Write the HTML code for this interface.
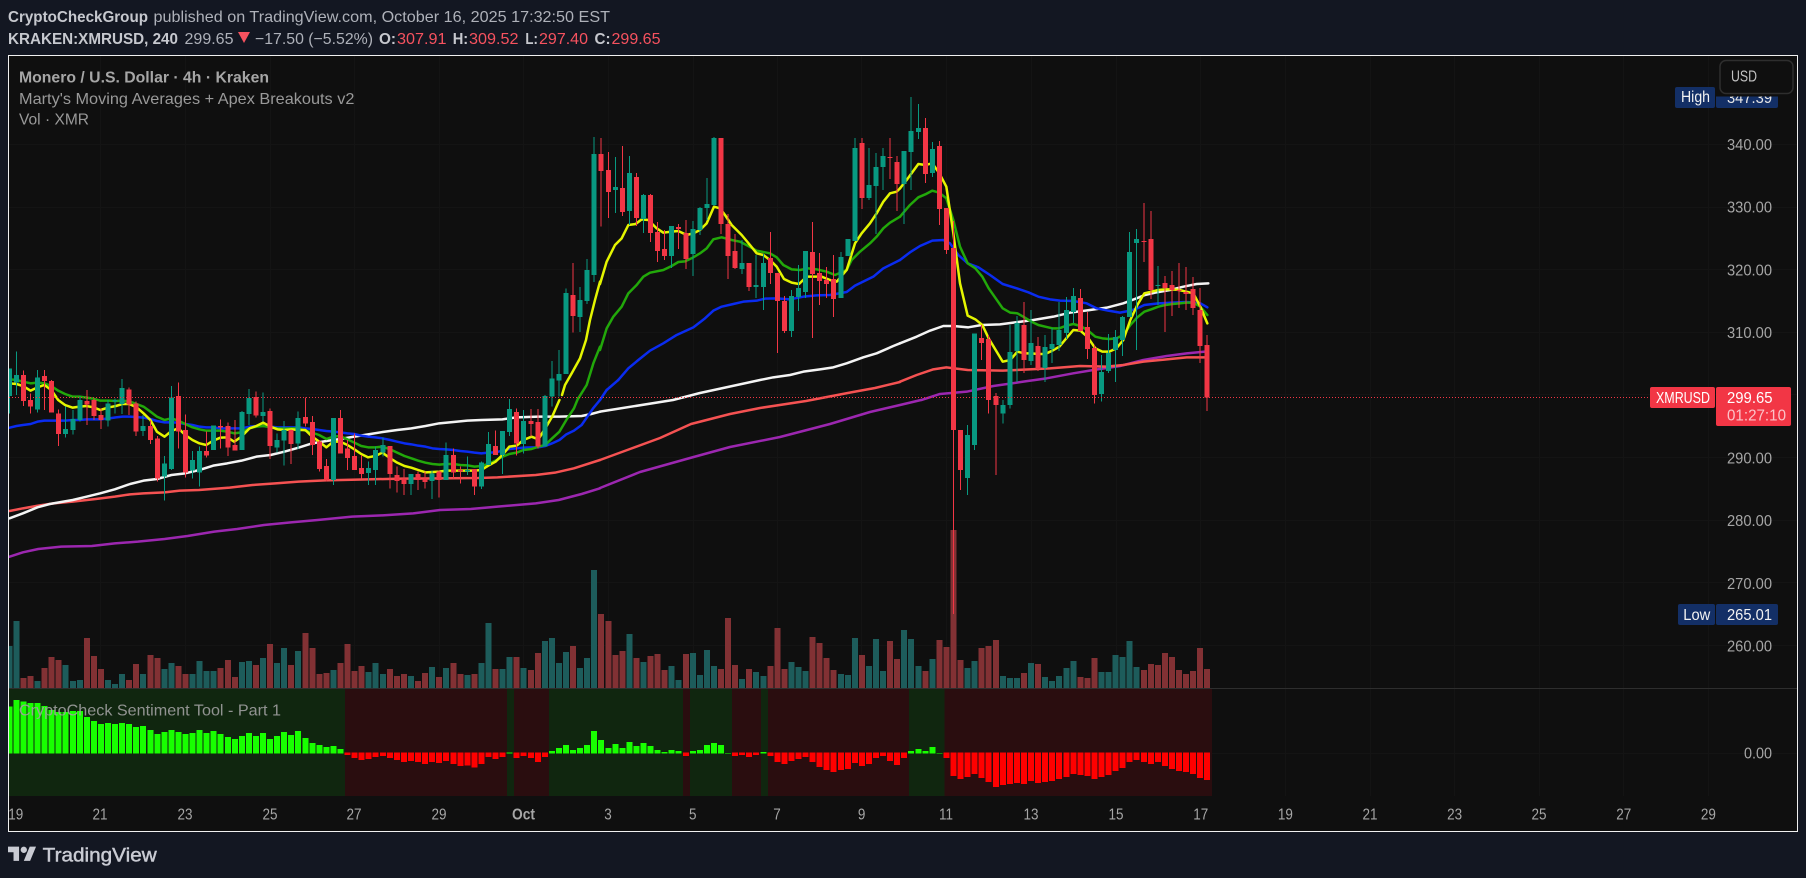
<!DOCTYPE html>
<html><head><meta charset="utf-8"><title>XMRUSD</title>
<style>
html,body{margin:0;padding:0;background:#131722;width:1806px;height:878px;overflow:hidden}
svg{display:block;font-family:"Liberation Sans",sans-serif}
.n{vector-effect:non-scaling-stroke;fill:none}
.w{stroke-width:1}
.b{stroke-width:5}
.v{stroke-width:6}
.g{stroke:#089981}
.r{stroke:#f23645}
.l{stroke-width:2.5;stroke-linejoin:round;stroke-linecap:round;fill:none;vector-effect:non-scaling-stroke}
text{white-space:pre}
.pr{font-size:16px;fill:#a6a6a6}
.dt{font-size:16px;fill:#a6a6a6;text-anchor:middle}
</style></head>
<body>
<svg width="1806" height="878" viewBox="0 0 1806 878" xmlns="http://www.w3.org/2000/svg">
<defs><clipPath id="c"><rect x="9" y="56" width="1788" height="775"/></clipPath></defs>
<rect width="1806" height="878" fill="#131722"/>
<text x="8" y="22" font-size="16" font-weight="700" fill="#c6c8ce" textLength="140" lengthAdjust="spacingAndGlyphs">CryptoCheckGroup</text>
<text x="153.5" y="22" font-size="16" fill="#aeb1b9" textLength="456.5" lengthAdjust="spacingAndGlyphs">published on TradingView.com, October 16, 2025 17:32:50 EST</text>
<text x="8" y="44" font-size="16" font-weight="700" fill="#c6c8ce" textLength="170" lengthAdjust="spacingAndGlyphs">KRAKEN:XMRUSD, 240</text>
<text x="184.5" y="44" font-size="16" fill="#aeb1b9" textLength="49" lengthAdjust="spacingAndGlyphs">299.65</text>
<path d="M238 32H250L244 43Z" fill="#f7525f"/>
<text x="255" y="44" font-size="16" fill="#aeb1b9" textLength="118" lengthAdjust="spacingAndGlyphs">−17.50 (−5.52%)</text>
<text x="379" y="44" font-size="16" font-weight="700" fill="#c6c8ce" textLength="17" lengthAdjust="spacingAndGlyphs">O:</text>
<text x="397" y="44" font-size="16" fill="#f7525f" textLength="49.5" lengthAdjust="spacingAndGlyphs">307.91</text>
<text x="452.7" y="44" font-size="16" font-weight="700" fill="#c6c8ce" textLength="15.5" lengthAdjust="spacingAndGlyphs">H:</text>
<text x="469" y="44" font-size="16" fill="#f7525f" textLength="49.5" lengthAdjust="spacingAndGlyphs">309.52</text>
<text x="525.4" y="44" font-size="16" font-weight="700" fill="#c6c8ce" textLength="12.5" lengthAdjust="spacingAndGlyphs">L:</text>
<text x="539" y="44" font-size="16" fill="#f7525f" textLength="49" lengthAdjust="spacingAndGlyphs">297.40</text>
<text x="594.5" y="44" font-size="16" font-weight="700" fill="#c6c8ce" textLength="16" lengthAdjust="spacingAndGlyphs">C:</text>
<text x="611.5" y="44" font-size="16" fill="#f7525f" textLength="49" lengthAdjust="spacingAndGlyphs">299.65</text>

<rect x="8.5" y="55.5" width="1789" height="776" fill="#0f0f0f" stroke="#f0f0f0" stroke-width="1"/>

<g clip-path="url(#c)">
<!-- grid -->
<path d="M100.5 56V796M185.5 56V796M270.5 56V796M354.5 56V796M439.5 56V796M523.5 56V796M608.5 56V796M693.5 56V796M777.5 56V796M861.5 56V796M946.5 56V796M1031.5 56V796M1116.5 56V796M1200.5 56V796M1285.5 56V796M1370.5 56V796M1454.5 56V796M1539.5 56V796M1623.5 56V796M1708.5 56V796" stroke="#141414" stroke-width="1" fill="none"/>
<path d="M9 144.5H1797M9 207.5H1797M9 269.5H1797M9 332.5H1797M9 394.5H1797M9 457.5H1797M9 520.5H1797M9 582.5H1797M9 645.5H1797M9 753.5H1797" stroke="#141414" stroke-width="1" fill="none"/>

<!-- volume -->
<g transform="matrix(7.046 0 0 .33333 16.4 580)" shape-rendering="crispEdges">
<path class="n v" stroke="#1d5c5b" d="M-1 198V325M0 123V325M3 303V325M7 255V325M8 303V325M9 300V325M13 300V325M14 312V325M15 282V325M18 282V325M21 267V325M22 249V325M25 282V325M26 243V325M27 273V325M28 273V325M32 246V325M33 243V325M35 234V325M37 249V325M38 204V325M40 213V325M45 270V325M50 276V325M51 249V325M52 282V325M56 288V325M59 261V325M61 264V325M64 285V325M66 249V325M67 129V325M69 267V325M70 231V325M72 264V325M75 183V325M76 174V325M77 249V325M78 216V325M80 264V325M81 234V325M82 -30V325M87 162V325M89 246V325M93 258V325M94 300V325M96 219V325M97 285V325M98 210V325M99 258V325M103 297V325M105 276V325M106 288V325M110 246V325M111 261V325M112 273V325M117 282V325M118 285V325M119 174V325M121 258V325M122 177V325M123 273V325M126 150V325M127 177V325M128 258V325M130 237V325M135 264V325M136 243V325M140 288V325M141 294V325M142 294V325M144 249V325M146 291V325M147 303V325M148 288V325M149 264V325M150 243V325M154 276V325M155 276V325M156 225V325M157 231V325M158 183V325M159 261V325"/>
<path class="n v" stroke="#823134" d="M1 294V325M2 288V325M4 264V325M5 231V325M6 240V325M10 174V325M11 228V325M12 267V325M16 300V325M17 252V325M19 225V325M20 234V325M23 258V325M24 282V325M29 264V325M30 240V325M31 291V325M34 255V325M36 192V325M39 255V325M41 159V325M42 204V325M43 282V325M44 279V325M46 249V325M47 192V325M48 273V325M49 258V325M53 267V325M54 288V325M55 282V325M57 303V325M58 279V325M60 291V325M62 249V325M63 282V325M65 282V325M68 267V325M71 231V325M73 270V325M74 219V325M79 198V325M83 102V325M84 123V325M85 225V325M86 213V325M88 234V325M90 228V325M91 222V325M92 270V325M95 222V325M100 267V325M101 114V325M102 255V325M104 267V325M107 258V325M108 144V325M109 267V325M113 171V325M114 189V325M115 234V325M116 270V325M120 225V325M124 183V325M125 237V325M129 273V325M131 180V325M132 201V325M133 -150V325M134 240V325M137 204V325M138 198V325M139 180V325M143 279V325M145 252V325M151 291V325M152 294V325M153 234V325M160 270V325M161 252V325M162 255V325M163 219V325M164 231V325M165 270V325M166 282V325M167 273V325M168 204V325M169 267V325"/>
</g>

<!-- sentiment pane -->
<g shape-rendering="crispEdges">
<rect x="9" y="689" width="336" height="107" fill="#10260f"/>
<rect x="345" y="689" width="162" height="107" fill="#2a0d0f"/>
<rect x="507" y="689" width="7" height="107" fill="#10260f"/>
<rect x="514" y="689" width="35" height="107" fill="#2a0d0f"/>
<rect x="549" y="689" width="134" height="107" fill="#10260f"/>
<rect x="683" y="689" width="7" height="107" fill="#2a0d0f"/>
<rect x="690" y="689" width="42" height="107" fill="#10260f"/>
<rect x="732" y="689" width="29" height="107" fill="#2a0d0f"/>
<rect x="761" y="689" width="7" height="107" fill="#10260f"/>
<rect x="768" y="689" width="141" height="107" fill="#2a0d0f"/>
<rect x="909" y="689" width="35.5" height="107" fill="#10260f"/>
<rect x="944.5" y="689" width="267.5" height="107" fill="#2a0d0f"/>
<rect x="9" y="688" width="1788" height="1" fill="#2e2e2e"/>
</g>
<g transform="matrix(7.046 0 0 .33333 16.4 580)" shape-rendering="crispEdges">
<path class="n v" stroke="#18ff00" d="M-1 380V521M0 360V521M1 364V521M2 369V521M3 369V521M4 378V521M5 390V521M6 396V521M7 396V521M8 393V521M9 393V521M10 411V521M11 423V521M12 432V521M13 429V521M14 432V521M15 429V521M16 432V521M17 441V521M18 438V521M19 450V521M20 462V521M21 456V521M22 450V521M23 456V521M24 462V521M25 459V521M26 450V521M27 459V521M28 453V521M29 462V521M30 471V521M31 477V521M32 468V521M33 459V521M34 468V521M35 459V521M36 477V521M37 468V521M38 456V521M39 465V521M40 453V521M41 474V521M42 489V521M43 495V521M44 501V521M45 498V521M46 507V521M70 518V521M76 513V521M77 504V521M78 495V521M79 510V521M80 504V521M81 495V521M82 453V521M83 480V521M84 504V521M85 492V521M86 504V521M87 486V521M88 498V521M89 489V521M90 498V521M91 510V521M92 516V521M93 510V521M94 513V521M96 513V521M97 510V521M98 495V521M99 489V521M100 495V521M101 519V521M106 516V521M127 513V521M128 507V521M129 513V521M130 501V521M131 519V521"/>
<path class="n v" stroke="#ff0000" d="M47 518V525M48 518V534M49 518V540M50 518V537M51 518V531M52 518V528M53 518V534M54 518V540M55 518V546M56 518V543M57 518V546M58 518V552M59 518V546M60 518V549M61 518V543M62 518V552M63 518V558M64 518V556M65 518V562M66 518V552M67 518V531M68 518V537M69 518V531M71 518V534M72 518V528M73 518V534M74 518V546M75 518V531M95 518V528M102 518V528M103 518V525M104 518V531M105 518V525M107 518V528M108 518V546M109 518V552M110 518V543M111 518V537M112 518V531M113 518V546M114 518V561M115 518V570M116 518V576M117 518V570M118 518V567M119 518V549M120 518V558M121 518V552M122 518V534M123 518V528M124 518V543M125 518V555M126 518V534M132 518V534M133 518V588M134 518V597M135 518V591M136 518V582M137 518V594M138 518V606M139 518V621M140 518V615M141 518V612M142 518V609M143 518V612M144 518V603M145 518V609M146 518V606M147 518V603M148 518V597M149 518V591M150 518V582M151 518V585M152 518V588M153 518V597M154 518V591M155 518V585M156 518V573M157 518V564M158 518V546M159 518V540M160 518V546M161 518V552M162 518V546M163 518V558M164 518V567M165 518V573M166 518V576M167 518V582M168 518V594M169 518V600"/>
</g>

<!-- moving averages -->
<g>
<polyline class="l" stroke="#9c27b0" transform="matrix(.38265 0 0 .33333 0 300)" points="25,770 60,757 100,747 160,740 240,738 300,730 360,725 430,717 490,708 560,695 620,687 690,675 760,667 830,660 920,650 1000,646 1080,640 1150,630 1230,627 1300,620 1400,610 1460,600 1520,582 1568,565"/>
<polyline class="l" stroke="#9c27b0" points="600,488 640,472 690,458 730,447 780,437 830,424 870,412 900,405 921,400"/>
<polyline class="l" stroke="#9c27b0" transform="matrix(.33333 0 0 .33333 900 80)" points="65,960 120,942 200,935 280,918 370,905 440,895 520,880 580,870 660,858 730,840 800,828 860,820 915,815"/>

<polyline class="l" stroke="#f55252" transform="matrix(.38265 0 0 .33333 0 300)" points="25,633 60,625 100,617 140,610 190,605 250,597 300,590 340,583 375,580 430,577 470,572 520,570 600,563 660,555 720,550 780,545 850,541 960,538 1050,536 1150,535 1250,534 1300,532 1400,525 1450,518 1500,505 1568,480"/>
<polyline class="l" stroke="#f55252" points="600,460 630,449 660,438 691,424 730,414 760,408 806,401 853,392 875,388 900,382"/>
<polyline class="l" stroke="#f55252" transform="matrix(.33333 0 0 .33333 900 80)" points="0,905 50,885 100,868 139,862 203,870 308,872 450,865 540,858 620,860 670,855 730,845 800,838 860,832 915,832"/>

<polyline class="l" stroke="#f4f4f4" transform="matrix(.38265 0 0 .33333 0 300)" points="25,655 60,640 98,622 130,612 190,600 226,590 262,580 300,568 340,552 375,542 410,537 448,525 484,520 521,510 557,497 594,490 631,482 670,470 707,465 743,455 780,443 816,430 853,423 889,417 926,410 962,403 1000,396 1038,390 1075,385 1112,378 1148,370 1185,366 1221,362 1258,360 1313,358 1350,352 1407,350 1462,350 1520,348 1545,342 1568,335"/>
<polyline class="l" stroke="#f4f4f4" transform="matrix(.33333 0 0 .33333 600 80)" points="0,995 219,960 300,939 480,900 520,892 570,885 610,875 660,868 700,862 740,850 790,832 830,820 880,798 900,790"/>
<polyline class="l" stroke="#f4f4f4" transform="matrix(.33333 0 0 .33333 900 80)" points="0,790 50,770 90,752 130,738 160,738 205,742 245,735 300,733 340,728 400,720 460,710 510,698 570,690 620,683 670,670 710,655 735,645 770,637 810,630 850,620 890,612 925,610"/>

<polyline class="l" stroke="#0a2cf0" transform="matrix(.38265 0 0 .33333 0 300)" points="25,383 43,378 60,375 80,372 98,365 116,362 134,362 152,362 170,362 190,360 208,360 226,358 244,358 262,358 285,355 303,352 320,350 338,350 357,351 375,353 393,357 410,363 430,367 448,367 466,368 484,372 503,375 521,380 539,382 557,382 576,385 594,385 612,385 631,385 652,380 670,378 688,378 707,380 725,382 743,382 762,382 780,382 798,385 816,387 834,390 853,393 871,395 889,397 908,400 926,402 944,407 962,410 981,412 999,415 1020,420 1038,425 1057,430 1075,433 1093,437 1112,440 1130,445 1148,447 1166,448 1185,450 1203,453 1221,455 1240,458 1258,460 1276,458 1295,457 1313,452 1331,447 1350,445 1368,443 1389,442 1407,442 1425,438 1443,430 1462,420 1480,403 1500,392 1520,375 1535,350 1550,325 1568,300"/>
<polyline class="l" stroke="#0a2cf0" transform="matrix(.33333 0 0 .33333 400 100)" points="600,900 620,870"/>
<polyline class="l" stroke="#0a2cf0" points="606.7,390 618.3,380"/>
<polyline class="l" stroke="#0a2cf0" transform="matrix(.33333 0 0 .33333 600 80)" points="55,900 85,865 115,840 150,812 190,790 230,765 280,742 315,715 340,692 365,680 400,672 430,665 470,662 495,656 530,655 570,658 610,650 650,646 690,645 740,636 765,617 820,590 850,565 900,540"/>
<polyline class="l" stroke="#0a2cf0" transform="matrix(.33333 0 0 .33333 900 80)" points="0,540 30,517 60,498 97,482 130,480 150,490 175,525 203,550 235,562 270,585 308,612 350,625 385,637 415,650 450,658 480,662 520,663 560,670 590,685 625,692 660,698 691,692 712,685 733,675 775,670 817,668 859,666 880,668 901,670 922,682"/>

<polyline class="l" stroke="#22a80a" transform="matrix(.38265 0 0 .33333 0 300)" points="25,238 43,240 60,245 80,250 98,248 116,250 134,258 152,272 170,282 190,290 208,290 226,293 244,296 262,302 285,302 303,303 320,302 338,304 357,312 375,320 393,335 410,350 430,360 448,355 466,362 484,372 503,382 521,388 539,392 557,392 576,392 594,395 612,400 631,397 652,385 670,380 688,378 707,382 725,385 743,386 762,385 780,385 798,392 816,398 834,405 853,417 871,410 889,408 908,418 926,428 944,438 962,442 981,442 999,440 1020,448 1038,458 1057,468 1075,475 1093,482 1112,488 1130,492 1148,494 1166,492 1185,492 1203,495 1221,496 1240,500 1258,498 1276,492 1295,482 1313,470 1331,462 1350,458 1368,450 1389,447 1407,440 1425,435 1443,415 1462,395 1480,360 1500,325 1511,294"/>
<polyline class="l" stroke="#22a80a" transform="matrix(.33333 0 0 .33333 400 100)" points="535,895 560,855 580,790 600,740"/>
<polyline class="l" stroke="#22a80a" transform="matrix(.33333 0 0 .33333 600 80)" points="0,810 20,745 40,710 65,680 85,640 110,615 130,590 150,578 190,570 215,558 235,546 255,544 280,532 300,520 320,505 340,478 365,472 395,480 420,485 445,498 470,512 510,520 530,532 550,555 575,568 600,570 625,565 650,568 680,575 705,585 740,570 755,540 780,515 810,490 830,470 850,445 870,428 900,410"/>
<polyline class="l" stroke="#22a80a" transform="matrix(.33333 0 0 .33333 900 80)" points="0,410 30,375 55,352 76,343 97,332 118,338 139,355 160,420 180,500 203,550 226,565 247,590 266,625 287,655 308,685 331,698 352,700 373,712 394,725 415,735 436,740 457,745 478,745 499,737 520,732 541,738 562,750 586,770 607,775 628,777 649,775 670,765 691,735 712,712 733,695 754,688 775,680 796,675 817,672 838,670 859,668 880,668 901,680 922,705"/>

<polyline class="l" stroke="#e4f500" transform="matrix(.38265 0 0 .33333 0 300)" points="25,250 43,252 60,258 80,272 98,262 116,255 134,270 152,300 170,315 190,323 208,320 226,318 244,322 262,330 285,322 303,318 320,312 338,312 357,322 375,340 393,360 410,395 430,410 448,393 466,385 484,405 503,420 521,430 539,435 557,422 576,413 594,412 612,425 631,410 652,385 670,378 688,368 707,380 725,388 743,390 762,388 780,390 798,390 816,410 834,425 853,442 871,425 889,425 908,435 926,448 944,462 962,472 981,468 999,458 1020,475 1038,488 1057,498 1075,503 1093,510 1112,517 1130,516 1148,515 1166,512 1185,512 1203,512 1221,512 1240,512 1258,510 1276,497 1295,485 1313,465 1331,440 1350,437 1368,420 1389,410 1407,418 1425,385 1443,350 1462,300"/>
<polyline class="l" stroke="#e4f500" transform="matrix(.33333 0 0 .33333 400 100)" points="486,885 495,855 515,820 540,775 558,720 570,660 585,600 600,545"/>
<polyline class="l" stroke="#e4f500" transform="matrix(.33333 0 0 .33333 600 80)" points="0,612 20,545 45,495 65,475 85,435 107,432 125,418 145,420 170,445 190,458 215,455 235,453 260,465 280,460 300,450 320,430 342,380 360,385 375,405 395,435 425,465 450,495 470,520 490,525 510,540 530,560 552,597 575,608 597,612 620,590 640,590 665,590 690,600 710,605 740,570 765,490 785,460 810,430 830,400 850,365 870,340 890,335 900,325"/>
<polyline class="l" stroke="#e4f500" transform="matrix(.33333 0 0 .33333 900 80)" points="0,325 20,300 55,252 76,255 97,250 118,280 139,320 160,460 180,610 203,707 226,718 247,735 266,775 287,810 308,845 331,840 352,815 373,820 394,820 415,822 436,822 457,812 478,800 499,775 520,750 541,752 562,770 586,805 607,815 628,815 649,805 670,780 691,720 712,675 733,640 754,635 775,630 796,628 817,628 838,630 859,635 880,640 901,680 922,730"/>
</g>

<!-- candles -->
<g shape-rendering="crispEdges">
<g transform="matrix(7.046 0 0 .33333 16.4 300)">
<path class="n w g" d="M-1 205V340M0 155V285M3 210V338M7 320V413M8 330V403M9 290V365M13 300V380M14 296V340M15 237V342M18 345V408M21 468V602M22 258V510M25 453V535M26 440V560M28 376V450M32 333V450M33 267V375M35 277V365M37 400V458M38 363V497M40 335V447M45 354V555M50 485V555M51 440V555M52 413V470M56 522V585M59 512V597M61 427V540M64 470V525M66 485V567M67 396V495M69 393V522M70 297V408M72 330V460M75 285V440M76 183V320M77 150V290"/>
<path class="n b g" d="M-1 205V288M0 225V248M3 232V328M7 387V402M8 357V390M9 300V360M13 310V362M14 300V305M15 264V312M18 378V393M21 490V530M22 292V507M25 480V512M26 453V517M28 376V450M32 336V450M33 294V342M35 336V348M37 420V442M38 390V422M40 354V430M45 354V540M50 504V519M51 450V510M52 435V457M56 522V552M59 520V543M61 465V540M64 510V514M66 487V560M67 432V495M69 393V465M70 327V396M72 363V432M75 288V440M76 235V290M77 222V242"/>
<path class="n w r" d="M1 212V318M2 280V340M4 210V330M5 240V338M6 328V438M10 270V375M11 295V360M12 325V387M16 262V345M17 305V408M19 362V432M20 408V545M23 247V445M24 343V533M27 395V472M29 358V445M30 368V468M31 360V452M34 275V352M36 325V477M39 388V492M41 292V380M42 348V465M43 420V515M44 477V545M46 330V460M47 420V510M48 400V510M49 465V535M53 438V565M54 500V578M55 507V585M57 515V570M58 515V565M60 512V592M62 445V535M63 500V550M65 507V585M68 392V465M71 325V466M73 327V410M74 327V445"/>
<path class="n b r" d="M1 225V303M2 300V320M4 228V243M5 243V338M6 340V402M10 303V313M11 300V348M12 345V360M16 268V313M17 310V395M19 378V420M20 415V535M23 288V395M24 390V517M27 453V466M29 378V382M30 378V443M31 435V452M34 291V346M36 333V438M39 390V432M41 351V370M42 366V435M43 424V507M44 498V540M46 354V460M47 446V474M48 468V510M49 504V522M53 438V522M54 525V543M55 535V552M57 522V540M58 535V546M60 514V540M62 465V518M63 510V514M65 507V560M68 438V465M71 336V430M73 363V372M74 366V440"/>
</g>
<g transform="matrix(7.046 0 0 .33333 16.4 100)">
<path class="n w g" d="M78 565V822M80 561V696M81 477V612M82 111V546"/>
<path class="n b g" d="M78 579V822M80 600V651M81 510V603M82 162V525"/>
<path class="n w r" d="M79 489V698"/>
<path class="n b r" d="M79 585V648"/>
</g>
<g transform="matrix(7.046 0 0 .33333 16.4 80)">
<path class="n w g" d="M85 231V399M87 228V435M89 342V459M93 438V564M96 423V588M97 381V465M98 294V420M99 171V378M103 480V582M105 525V654M106 522V690M110 630V771M111 555V693M112 513V654M117 516V654M118 477V528M119 174V483M121 204V360M122 219V462M123 204V330M126 213V432M127 51V330M128 72V177M130 186V291M135 1035V1245M136 760V1110M140 960V1030M141 735V985M142 708V906M144 690V855M146 765V906M147 744V849M148 666V813M149 651V777M150 624V729M154 825V965M155 762V879M156 750V906M157 708V828M158 456V711M159 447V810M162 558V675"/>
<path class="n b g" d="M85 321V330M87 279V393M89 345V417M93 438V528M96 447V522M97 384V450M98 372V384M99 174V375M103 549V567M105 615V621M106 549V621M110 648V753M111 624V651M112 513V636M117 531V654M118 477V528M119 204V483M121 315V354M122 261V318M123 228V261M126 213V312M127 153V216M128 144V156M130 207V279M135 1065V1194M136 760V1095M140 975V1000M141 816V975M142 729V813M144 789V843M146 801V864M147 792V807M148 750V795M149 690V759M150 648V696M154 876V942M155 819V873M156 771V810M157 711V780M158 516V711M159 477V489M162 615V618"/>
<path class="n w r" d="M83 174V440M84 216V414M86 198V408M88 279V438M90 342V486M91 426V546M92 450V540M94 432V507M95 420V567M100 174V462M101 402V597M102 462V567M104 549V633M107 456V612M108 579V819M109 648V759M113 426V774M114 519V675M115 561V654M116 525V711M120 174V387M124 174V297M125 228V393M129 114V309M131 183V435M132 384V522M133 423V1602M134 1050V1230M137 735V840M138 765V1000M139 939V1185M143 666V879M145 771V873M151 627V754M152 696V837M153 795V970M160 369V546M161 393V657M163 588V756M164 573V708M165 549V684M166 561V690M167 591V705M168 624V849M169 765V993"/>
<path class="n b r" d="M83 222V273M84 270V336M86 324V396M88 291V414M90 345V459M91 456V513M92 507V528M94 441V447M95 459V537M100 174V432M101 432V528M102 513V564M104 549V621M107 534V579M108 579V663M109 663V753M113 516V582M114 579V603M115 600V612M116 597V657M120 189V354M124 231V234M125 246V312M129 144V282M131 198V387M132 384V510M133 504V1050M134 1050V1170M137 774V789M138 777V960M139 948V975M143 735V840M145 798V867M151 654V753M152 741V807M153 804V945M160 483V486M161 477V630M163 609V624M164 615V630M165 630V633M166 636V642M167 627V684M168 690V798M169 795V953"/>
</g>
</g>

<!-- last price line -->
<path d="M9 397.5H1650" stroke="#f23645" stroke-width="1" stroke-dasharray="1 2" fill="none"/>
</g>

<!-- legends -->
<text x="19" y="82.7" font-size="16" font-weight="700" fill="#a6a6a6" textLength="250" lengthAdjust="spacingAndGlyphs">Monero / U.S. Dollar · 4h · Kraken</text>
<text x="19" y="104" font-size="16" fill="#999" textLength="335.4" lengthAdjust="spacingAndGlyphs">Marty's Moving Averages + Apex Breakouts v2</text>
<text x="19" y="124.5" font-size="16" fill="#999" textLength="70" lengthAdjust="spacingAndGlyphs">Vol · XMR</text>
<text x="19" y="715.3" font-size="16" fill="#a0a0a0" fill-opacity=".9" textLength="262" lengthAdjust="spacingAndGlyphs">CryptoCheck Sentiment Tool - Part 1</text>

<!-- price axis -->
<text class="pr" x="1727" y="150" textLength="45" lengthAdjust="spacingAndGlyphs">340.00</text>
<text class="pr" x="1727" y="212.7" textLength="45" lengthAdjust="spacingAndGlyphs">330.00</text>
<text class="pr" x="1727" y="275.4" textLength="45" lengthAdjust="spacingAndGlyphs">320.00</text>
<text class="pr" x="1727" y="338" textLength="45" lengthAdjust="spacingAndGlyphs">310.00</text>
<text class="pr" x="1727" y="463.5" textLength="45" lengthAdjust="spacingAndGlyphs">290.00</text>
<text class="pr" x="1727" y="526" textLength="45" lengthAdjust="spacingAndGlyphs">280.00</text>
<text class="pr" x="1727" y="589" textLength="45" lengthAdjust="spacingAndGlyphs">270.00</text>
<text class="pr" x="1727" y="651.5" textLength="45" lengthAdjust="spacingAndGlyphs">260.00</text>
<text class="pr" x="1744" y="758.5" textLength="28" lengthAdjust="spacingAndGlyphs">0.00</text>

<!-- High -->
<rect x="1675" y="87" width="40" height="21" rx="2" fill="#132f66"/>
<rect x="1716" y="87" width="62" height="21" rx="2" fill="#132f66"/>
<text x="1681" y="102" font-size="16" fill="#f2f2f2" textLength="29" lengthAdjust="spacingAndGlyphs">High</text>
<text x="1727" y="103" font-size="16" fill="#e6e6e6" textLength="45" lengthAdjust="spacingAndGlyphs">347.39</text>
<!-- USD button -->
<rect x="1716" y="80" width="80" height="16.5" fill="#0f0f0f"/>
<rect x="1720" y="60.5" width="73" height="33" rx="6" fill="#0f0f0f" stroke="#2e2e2e" stroke-width="1.5"/>
<text x="1731" y="81.7" font-size="16" fill="#c2c2c2" textLength="26" lengthAdjust="spacingAndGlyphs">USD</text>

<!-- XMRUSD badge -->
<rect x="1650" y="387" width="65" height="21" rx="2" fill="#f23645"/>
<rect x="1716" y="387" width="75" height="39" rx="2" fill="#f23645"/>
<text x="1656" y="403" font-size="16" fill="#fff" textLength="54" lengthAdjust="spacingAndGlyphs">XMRUSD</text>
<text x="1727" y="403" font-size="16" fill="#fff" textLength="45.5" lengthAdjust="spacingAndGlyphs">299.65</text>
<text x="1727" y="420.7" font-size="16" fill="#fbc3c9" textLength="59" lengthAdjust="spacingAndGlyphs">01:27:10</text>

<!-- Low badge -->
<rect x="1678" y="604" width="37" height="21" rx="2" fill="#132f66"/>
<rect x="1716" y="604" width="62" height="21" rx="2" fill="#132f66"/>
<text x="1683.3" y="620" font-size="16" fill="#f2f2f2" textLength="27" lengthAdjust="spacingAndGlyphs">Low</text>
<text x="1727" y="620" font-size="16" fill="#f2f2f2" textLength="45" lengthAdjust="spacingAndGlyphs">265.01</text>

<!-- time axis -->
<text class="dt" x="15.7" y="819.5" textLength="15" lengthAdjust="spacingAndGlyphs">19</text>
<text class="dt" x="100" y="819.5" textLength="15" lengthAdjust="spacingAndGlyphs">21</text>
<text class="dt" x="185" y="819.5" textLength="15" lengthAdjust="spacingAndGlyphs">23</text>
<text class="dt" x="270" y="819.5" textLength="15" lengthAdjust="spacingAndGlyphs">25</text>
<text class="dt" x="354" y="819.5" textLength="15" lengthAdjust="spacingAndGlyphs">27</text>
<text class="dt" x="439" y="819.5" textLength="15" lengthAdjust="spacingAndGlyphs">29</text>
<text class="dt" x="523.5" y="819.5" font-weight="700" textLength="23" lengthAdjust="spacingAndGlyphs">Oct</text>
<text class="dt" x="608" y="819.5" textLength="7.5" lengthAdjust="spacingAndGlyphs">3</text>
<text class="dt" x="692.7" y="819.5" textLength="7.5" lengthAdjust="spacingAndGlyphs">5</text>
<text class="dt" x="777" y="819.5" textLength="7.5" lengthAdjust="spacingAndGlyphs">7</text>
<text class="dt" x="861.6" y="819.5" textLength="7.5" lengthAdjust="spacingAndGlyphs">9</text>
<text class="dt" x="946" y="819.5" textLength="14" lengthAdjust="spacingAndGlyphs">11</text>
<text class="dt" x="1031" y="819.5" textLength="15" lengthAdjust="spacingAndGlyphs">13</text>
<text class="dt" x="1116" y="819.5" textLength="15" lengthAdjust="spacingAndGlyphs">15</text>
<text class="dt" x="1200.8" y="819.5" textLength="15" lengthAdjust="spacingAndGlyphs">17</text>
<text class="dt" x="1285.4" y="819.5" textLength="15" lengthAdjust="spacingAndGlyphs">19</text>
<text class="dt" x="1370" y="819.5" textLength="15" lengthAdjust="spacingAndGlyphs">21</text>
<text class="dt" x="1454.6" y="819.5" textLength="15" lengthAdjust="spacingAndGlyphs">23</text>
<text class="dt" x="1539" y="819.5" textLength="15" lengthAdjust="spacingAndGlyphs">25</text>
<text class="dt" x="1623.8" y="819.5" textLength="15" lengthAdjust="spacingAndGlyphs">27</text>
<text class="dt" x="1708.4" y="819.5" textLength="15" lengthAdjust="spacingAndGlyphs">29</text>

<!-- logo -->
<g transform="translate(8 843.5) scale(.79)" fill="#c9cbd3">
<path d="M14 22H7V11H0V4h14v18zM28 22h-8l7.5-18h8L28 22z"/><circle cx="20" cy="8" r="4"/>
</g>
<text x="42.7" y="861.3" font-size="19" fill="#c9cbd3" stroke="#c9cbd3" stroke-width=".45" textLength="114" lengthAdjust="spacingAndGlyphs">TradingView</text>
</svg>
</body></html>
